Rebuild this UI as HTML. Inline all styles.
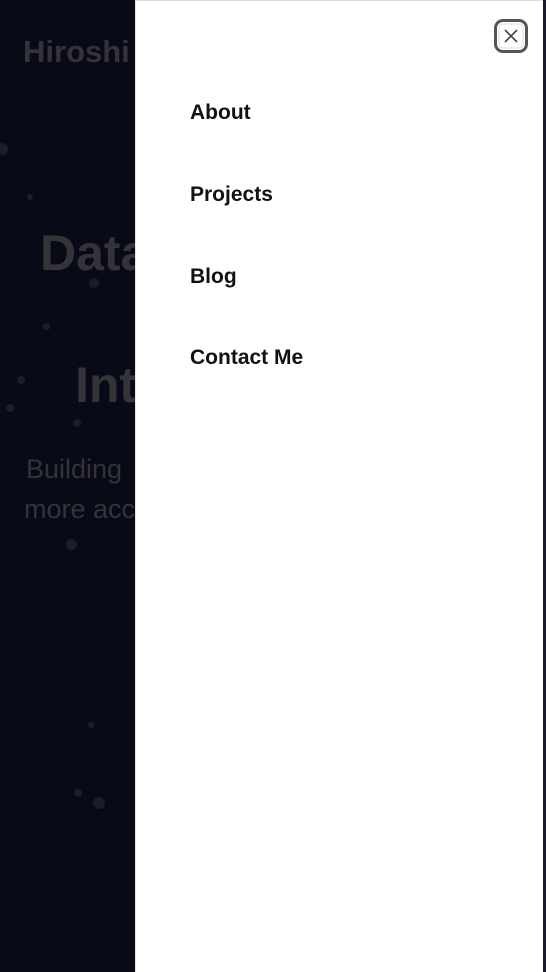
<!DOCTYPE html>
<html><head><style>
html,body{margin:0;padding:0;width:546px;height:972px;overflow:hidden;background:#0a0b18;font-family:"Liberation Sans",sans-serif}
.bg{position:absolute;left:0;top:0;width:546px;height:972px;background:#090a17}
.t{position:absolute;color:#343438;white-space:nowrap;font-weight:bold}
.dot{position:absolute;border-radius:50%;background:#1c1d2a}
.panel{position:absolute;left:135px;top:0;width:408px;height:972px;background:#fff;border-top:1px solid #ddd;border-left:1px solid #e6e6e6;box-sizing:border-box}
.edge{position:absolute;left:543px;top:0;width:3px;height:972px;background:#1a1c2e}
.nav{position:absolute;left:54px;font-size:21px;font-weight:bold;color:#111}
.close{position:absolute;left:358px;top:18px;width:34px;height:34px;box-sizing:border-box;border:3px solid #555;border-radius:9px}
</style></head><body>
<div class="bg"></div>
<div class="t" style="left:23px;top:34px;font-size:31px">Hiroshi</div>
<div class="t" style="left:40px;top:224px;font-size:50px">Data</div>
<div class="t" style="left:75px;top:356px;font-size:50px">Int</div>
<div class="t" style="left:26px;top:454px;font-size:27px;font-weight:normal">Building</div>
<div class="t" style="left:24px;top:494px;font-size:27px;font-weight:normal">more acc</div>
<div class="dot" style="left:-4px;top:143px;width:12px;height:12px"></div>
<div class="dot" style="left:27px;top:194px;width:6px;height:6px"></div>
<div class="dot" style="left:89px;top:278px;width:10px;height:10px"></div>
<div class="dot" style="left:43px;top:323px;width:7px;height:7px"></div>
<div class="dot" style="left:17px;top:376px;width:8px;height:8px"></div>
<div class="dot" style="left:6px;top:404px;width:8px;height:8px"></div>
<div class="dot" style="left:73px;top:419px;width:8px;height:8px"></div>
<div class="dot" style="left:66px;top:539px;width:11px;height:11px"></div>
<div class="dot" style="left:88px;top:722px;width:6px;height:6px"></div>
<div class="dot" style="left:74px;top:789px;width:8px;height:8px"></div>
<div class="dot" style="left:93px;top:797px;width:12px;height:12px"></div>
<div class="panel">
<div class="close"><svg width="28" height="28" viewBox="0 0 28 28" style="position:absolute;left:0;top:0"><rect x="2" y="2" width="24" height="24" rx="4" fill="none" stroke="#ddd" stroke-width="1"/><path d="M8 8L20 20M20 8L8 20" stroke="#444" stroke-width="1.6"/></svg></div>
<div class="nav" style="top:100px">About</div>
<div class="nav" style="top:182px">Projects</div>
<div class="nav" style="top:264px">Blog</div>
<div class="nav" style="top:345px">Contact Me</div>
</div>
<div class="edge"></div>
</body></html>
